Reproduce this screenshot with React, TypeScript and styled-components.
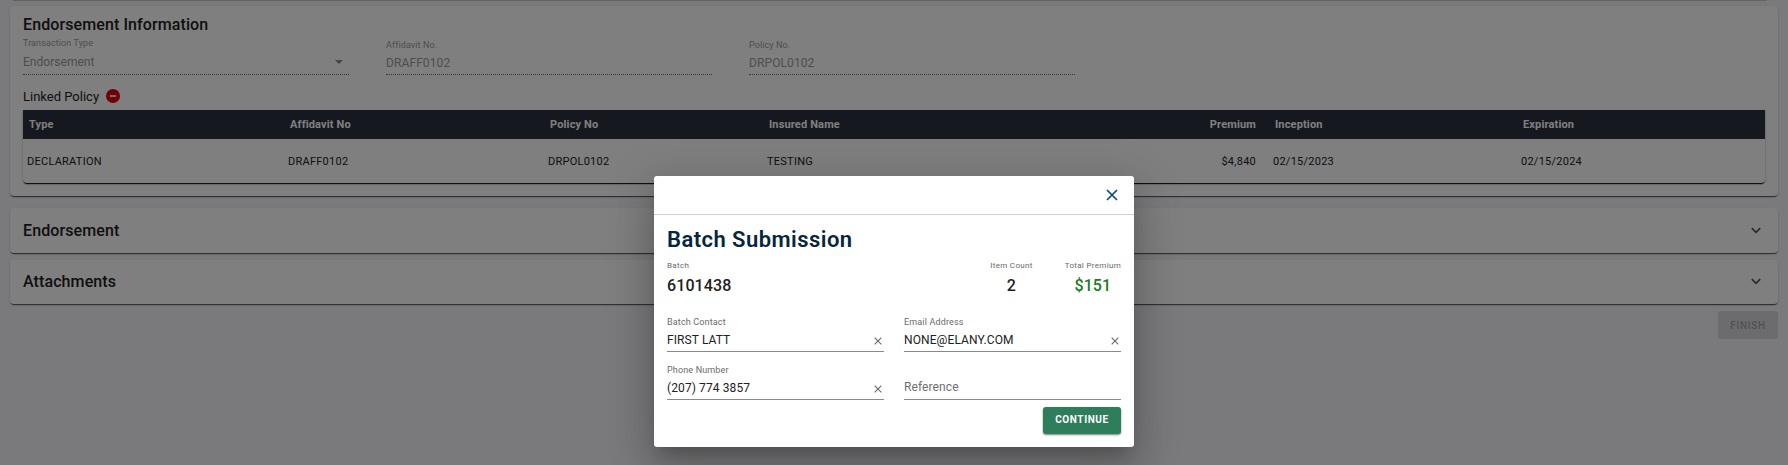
import React from 'react';
import styled, { createGlobalStyle } from 'styled-components';

const GlobalStyle = createGlobalStyle`
  * { box-sizing: border-box; }
  html, body { margin: 0; padding: 0; height: 100%; overflow: hidden; }
  body {
    background: #f5f5f9;
    color: #212121;
    font-family: Roboto, "Liberation Sans", sans-serif;
  }
`;

const Page = styled.div`
  position: relative;
  width: 1788px;
  height: 465px;
  padding: 0 10px;
  overflow: hidden;
`;

const Card = styled.section<{ $h: number; $gap: number }>`
  height: ${(p) => p.$h}px;
  margin-bottom: ${(p) => p.$gap}px;
  padding: 0 13px;
  background: #fff;
  border-radius: 4px;
  box-shadow: 0 2px 1px -1px rgba(0, 0, 0, 0.5), 0 1px 1px rgba(0, 0, 0, 0.24), 0 1px 3px rgba(0, 0, 0, 0.12);
`;

const PreviousCardEdge = styled.div`
  height: 1px;
  margin: 0 11px 5px 3px;
  background: #c9c9cc;
`;

const CardTitle = styled.h2`
  margin: 0;
  padding-top: 7px;
  font-size: 16px;
  line-height: 24px;
  font-weight: 500;
  letter-spacing: 0.1px;
`;

const FieldRow = styled.div`
  display: flex;
  gap: 37px;
  height: 38px;
`;

const DisabledField = styled.div<{ $select?: boolean }>`
  width: 326px;
  height: 38px;
  padding-top: ${(p) => (p.$select ? 0 : 2)}px;
  border-bottom: 1px dotted #6b6b6b;
  color: #9c9c9c;
`;

const DisabledLabel = styled.div`
  font-size: 9px;
  line-height: 12px;
  letter-spacing: 0.1px;
`;

const DisabledValue = styled.div<{ $select?: boolean }>`
  display: flex;
  justify-content: space-between;
  align-items: center;
  padding-right: 6px;
  margin-top: ${(p) => (p.$select ? 5 : 4)}px;
  font-size: 12px;
  line-height: 16px;
  letter-spacing: ${(p) => (p.$select ? 0.03 : 0.1)}px;
`;

const Linked = styled.div`
  display: flex;
  align-items: center;
  gap: 7px;
  height: 35px;
  padding-top: 7px;
  font-size: 13px;
  line-height: 16px;
`;

const LinkedText = styled.span`
  padding-top: 1px;
`;

const Table = styled.div`
  height: 73px;
  border-radius: 0 0 4px 4px;
  box-shadow: 0 2px 1px -1px rgba(0, 0, 0, 0.9), 0 1px 1px rgba(0, 0, 0, 0.24), 0 1px 3px rgba(0, 0, 0, 0.2);
`;

const TableRow = styled.div<{ $head?: boolean }>`
  display: grid;
  grid-template-columns: 261px 260px 219px 506px 248px 1fr;
  align-items: center;
  height: ${(p) => (p.$head ? 29 : 44)}px;
  padding-left: ${(p) => (p.$head ? 6 : 4)}px;
  background: ${(p) => (p.$head ? '#2b303d' : 'transparent')};
  color: ${(p) => (p.$head ? '#fff' : '#212121')};
  font-size: 11px;
  font-weight: ${(p) => (p.$head ? 700 : 400)};
  letter-spacing: ${(p) => (p.$head ? 0.15 : 0.25)}px;
`;

const NameAndPremium = styled.span<{ $head?: boolean }>`
  display: flex;
  justify-content: space-between;
  padding-right: ${(p) => (p.$head ? 19 : 17)}px;
`;

const PanelHeader = styled.div<{ $raised?: boolean }>`
  display: flex;
  align-items: center;
  justify-content: space-between;
  height: 100%;
  padding: 0 4px ${(p) => (p.$raised ? 1 : 0)}px 0;
  font-size: 16px;
  font-weight: 500;
  letter-spacing: 0.1px;
`;

const Footer = styled.div`
  display: flex;
  justify-content: flex-end;
`;

const FinishButton = styled.button`
  width: 60px;
  height: 28px;
  padding: 0;
  border: 0;
  border-radius: 3px;
  background: #d9d9dc;
  color: #a3a3a5;
  font: 500 10px Roboto, sans-serif;
  letter-spacing: 0.7px;
`;

const Backdrop = styled.div`
  position: absolute;
  inset: 0;
  display: flex;
  justify-content: center;
  align-items: flex-start;
  padding-top: 176px;
  background: rgba(0, 0, 0, 0.5);
`;

const Dialog = styled.div`
  width: 480px;
  height: 271px;
  background: #fff;
  border-radius: 3px;
  box-shadow: 0 11px 15px -7px rgba(0, 0, 0, 0.2), 0 24px 38px 3px rgba(0, 0, 0, 0.14), 0 9px 46px 8px rgba(0, 0, 0, 0.12);
`;

const DialogBar = styled.div`
  display: flex;
  align-items: center;
  justify-content: flex-end;
  height: 39px;
  padding-right: 16px;
  border-bottom: 1px solid #cfcfcf;
`;

const DialogBody = styled.div`
  padding: 11px 13px 0;
`;

const DialogTitle = styled.h1`
  margin: 0;
  font-size: 22px;
  line-height: 28px;
  font-weight: 600;
  letter-spacing: 0.45px;
  color: #06263f;
`;

const Summary = styled.div`
  display: flex;
  height: 60px;
  padding-top: 6px;
`;

const Stat = styled.div<{ $lead?: boolean; $green?: boolean }>`
  flex: ${(p) => (p.$lead ? 1 : 'none')};
  margin-left: ${(p) => (p.$green ? 32 : 0)}px;
  text-align: ${(p) => (p.$lead ? 'left' : 'center')};
  color: ${(p) => (p.$green ? '#1b7a1f' : '#212121')};
`;

const StatLabel = styled.div`
  font-size: 8px;
  line-height: 12px;
  letter-spacing: 0.32px;
  color: #666;
`;

const StatValue = styled.div`
  margin-top: 4px;
  font-size: 16px;
  line-height: 20px;
  font-weight: 500;
  letter-spacing: 0.1px;
`;

const Form = styled.div`
  display: grid;
  grid-template-columns: 217px 217px;
  column-gap: 20px;
  row-gap: 10px;
`;

const Field = styled.div`
  height: 38px;
  padding-top: 2px;
  border-bottom: 1px solid #8a8a8a;
`;

const FieldLabel = styled.div`
  height: 12px;
  font-size: 9px;
  line-height: 12px;
  letter-spacing: 0.15px;
  color: #6a6a6a;
`;

const FieldValue = styled.div<{ $placeholder?: boolean }>`
  display: flex;
  justify-content: space-between;
  align-items: center;
  height: 16px;
  margin-top: ${(p) => (p.$placeholder ? 3 : 4)}px;
  padding-right: 2px;
  font-size: 12px;
  line-height: 16px;
  letter-spacing: 0.1px;
  color: ${(p) => (p.$placeholder ? '#6f6f6f' : '#212121')};
`;

const ClearButton = styled.span`
  display: flex;
  padding-top: 2px;
`;

const Actions = styled.div`
  display: flex;
  justify-content: flex-end;
  padding-top: 7px;
`;

const ContinueButton = styled.button`
  width: 78px;
  height: 27px;
  padding: 0 0 2px;
  border: 0;
  border-radius: 3px;
  background: #2e7d5b;
  color: #fff;
  font: 700 10px Roboto, sans-serif;
  letter-spacing: 0.6px;
  box-shadow: 0 1px 2px rgba(0, 0, 0, 0.5);
`;

const Cross = ({ size, color, weight }: { size: number; color: string; weight: number }) => (
  <svg width={size} height={size} viewBox="0 0 12 12">
    <path d="M1 1 11 11M11 1 1 11" stroke={color} strokeWidth={weight} fill="none" />
  </svg>
);

const Chevron = () => (
  <svg width="10" height="7" viewBox="0 0 10 7">
    <path d="M.8 1.2 5 5.3 9.2 1.2" stroke="#555" strokeWidth="1.7" fill="none" />
  </svg>
);

const MinusCircle = () => (
  <svg width="14" height="14" viewBox="0 0 14 14">
    <circle cx="7" cy="7" r="7" fill="#e00010" />
    <rect x="3.7" y="6.2" width="6.6" height="1.6" fill="#fff" />
  </svg>
);

const headings = ['Type', 'Affidavit No', 'Policy No', 'Insured Name', 'Inception', 'Expiration'];
const policy = ['DECLARATION', 'DRAFF0102', 'DRPOL0102', 'TESTING', '02/15/2023', '02/15/2024'];

const PolicyRow = ({ cells, premium, head }: { cells: string[]; premium: string; head?: boolean }) => (
  <TableRow $head={head}>
    {cells.map((text, i) =>
      i === 3 ? (
        <NameAndPremium key={text} $head={head}>
          <span>{text}</span>
          <span>{premium}</span>
        </NameAndPremium>
      ) : (
        <span key={text}>{text}</span>
      ),
    )}
  </TableRow>
);

const contactFields = [
  { label: 'Batch Contact', value: 'FIRST LATT' },
  { label: 'Email Address', value: 'NONE@ELANY.COM' },
  { label: 'Phone Number', value: '(207) 774 3857' },
];

export default function App() {
  return (
    <>
      <GlobalStyle />
      <Page>
        <PreviousCardEdge />
        <Card $h={190} $gap={12}>
          <CardTitle>Endorsement Information</CardTitle>
          <FieldRow>
            <DisabledField $select>
              <DisabledLabel>Transaction Type</DisabledLabel>
              <DisabledValue $select>
                Endorsement
                <svg width="8" height="4" viewBox="0 0 8 4">
                  <path d="M0 0h8L4 4z" fill="#8c8c8c" />
                </svg>
              </DisabledValue>
            </DisabledField>
            <DisabledField>
              <DisabledLabel>Affidavit No.</DisabledLabel>
              <DisabledValue>DRAFF0102</DisabledValue>
            </DisabledField>
            <DisabledField>
              <DisabledLabel>Policy No.</DisabledLabel>
              <DisabledValue>DRPOL0102</DisabledValue>
            </DisabledField>
          </FieldRow>
          <Linked>
            <LinkedText>Linked Policy</LinkedText>
            <MinusCircle />
          </Linked>
          <Table>
            <PolicyRow head cells={headings} premium="Premium" />
            <PolicyRow cells={policy} premium="$4,840" />
          </Table>
        </Card>
        <Card $h={45} $gap={7}>
          <PanelHeader>
            Endorsement
            <Chevron />
          </PanelHeader>
        </Card>
        <Card $h={44} $gap={7}>
          <PanelHeader $raised>
            Attachments
            <Chevron />
          </PanelHeader>
        </Card>
        <Footer>
          <FinishButton disabled>FINISH</FinishButton>
        </Footer>

        <Backdrop>
          <Dialog role="dialog">
            <DialogBar>
              <Cross size={12} color="#0b4a87" weight={1.7} />
            </DialogBar>
            <DialogBody>
              <DialogTitle>Batch Submission</DialogTitle>
              <Summary>
                <Stat $lead>
                  <StatLabel>Batch</StatLabel>
                  <StatValue>6101438</StatValue>
                </Stat>
                <Stat>
                  <StatLabel>Item Count</StatLabel>
                  <StatValue>2</StatValue>
                </Stat>
                <Stat $green>
                  <StatLabel>Total Premium</StatLabel>
                  <StatValue>$151</StatValue>
                </Stat>
              </Summary>
              <Form>
                {contactFields.map((f) => (
                  <Field key={f.label}>
                    <FieldLabel>{f.label}</FieldLabel>
                    <FieldValue>
                      {f.value}
                      <ClearButton>
                        <Cross size={8} color="#666" weight={1.6} />
                      </ClearButton>
                    </FieldValue>
                  </Field>
                ))}
                <Field>
                  <FieldLabel />
                  <FieldValue $placeholder>Reference</FieldValue>
                </Field>
              </Form>
              <Actions>
                <ContinueButton>CONTINUE</ContinueButton>
              </Actions>
            </DialogBody>
          </Dialog>
        </Backdrop>
      </Page>
    </>
  );
}
